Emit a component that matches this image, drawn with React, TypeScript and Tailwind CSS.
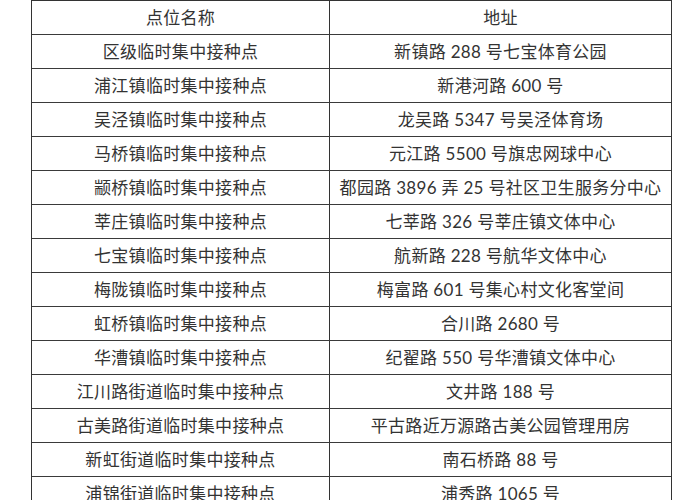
const ROWS: [string, string][] = [
  ["区级临时集中接种点", "新镇路 288 号七宝体育公园"],
  ["浦江镇临时集中接种点", "新港河路 600 号"],
  ["吴泾镇临时集中接种点", "龙吴路 5347 号吴泾体育场"],
  ["马桥镇临时集中接种点", "元江路 5500 号旗忠网球中心"],
  ["颛桥镇临时集中接种点", "都园路 3896 弄 25 号社区卫生服务分中心"],
  ["莘庄镇临时集中接种点", "七莘路 326 号莘庄镇文体中心"],
  ["七宝镇临时集中接种点", "航新路 228 号航华文体中心"],
  ["梅陇镇临时集中接种点", "梅富路 601 号集心村文化客堂间"],
  ["虹桥镇临时集中接种点", "合川路 2680 号"],
  ["华漕镇临时集中接种点", "纪翟路 550 号华漕镇文体中心"],
  ["江川路街道临时集中接种点", "文井路 188 号"],
  ["古美路街道临时集中接种点", "平古路近万源路古美公园管理用房"],
  ["新虹街道临时集中接种点", "南石桥路 88 号"],
  ["浦锦街道临时集中接种点", "浦秀路 1065 号"],
];

function Row({ left, right }: { left: string; right: string }) {
  return (
    <div className="flex h-[34px] border-b border-[#3a3a3a]">
      <div className="w-[298px] shrink-0 border-r border-[#333] flex items-center justify-center">
        {left}
      </div>
      <div className="flex-1 flex items-center justify-center">{right}</div>
    </div>
  );
}

export default function App() {
  return (
    <div className="w-[700px] h-[500px] overflow-hidden bg-white">
      <div
        className="ml-[31px] w-[641px] border-l border-r border-t border-[#333] text-[17px] tracking-[0.3px] text-[#333]"
        style={{ fontFamily: 'Lato, "Noto Sans CJK SC", sans-serif' }}
      >
        <Row left="点位名称" right="地址" />
        {ROWS.map(([l, r]) => (
          <Row key={l} left={l} right={r} />
        ))}
      </div>
    </div>
  );
}
